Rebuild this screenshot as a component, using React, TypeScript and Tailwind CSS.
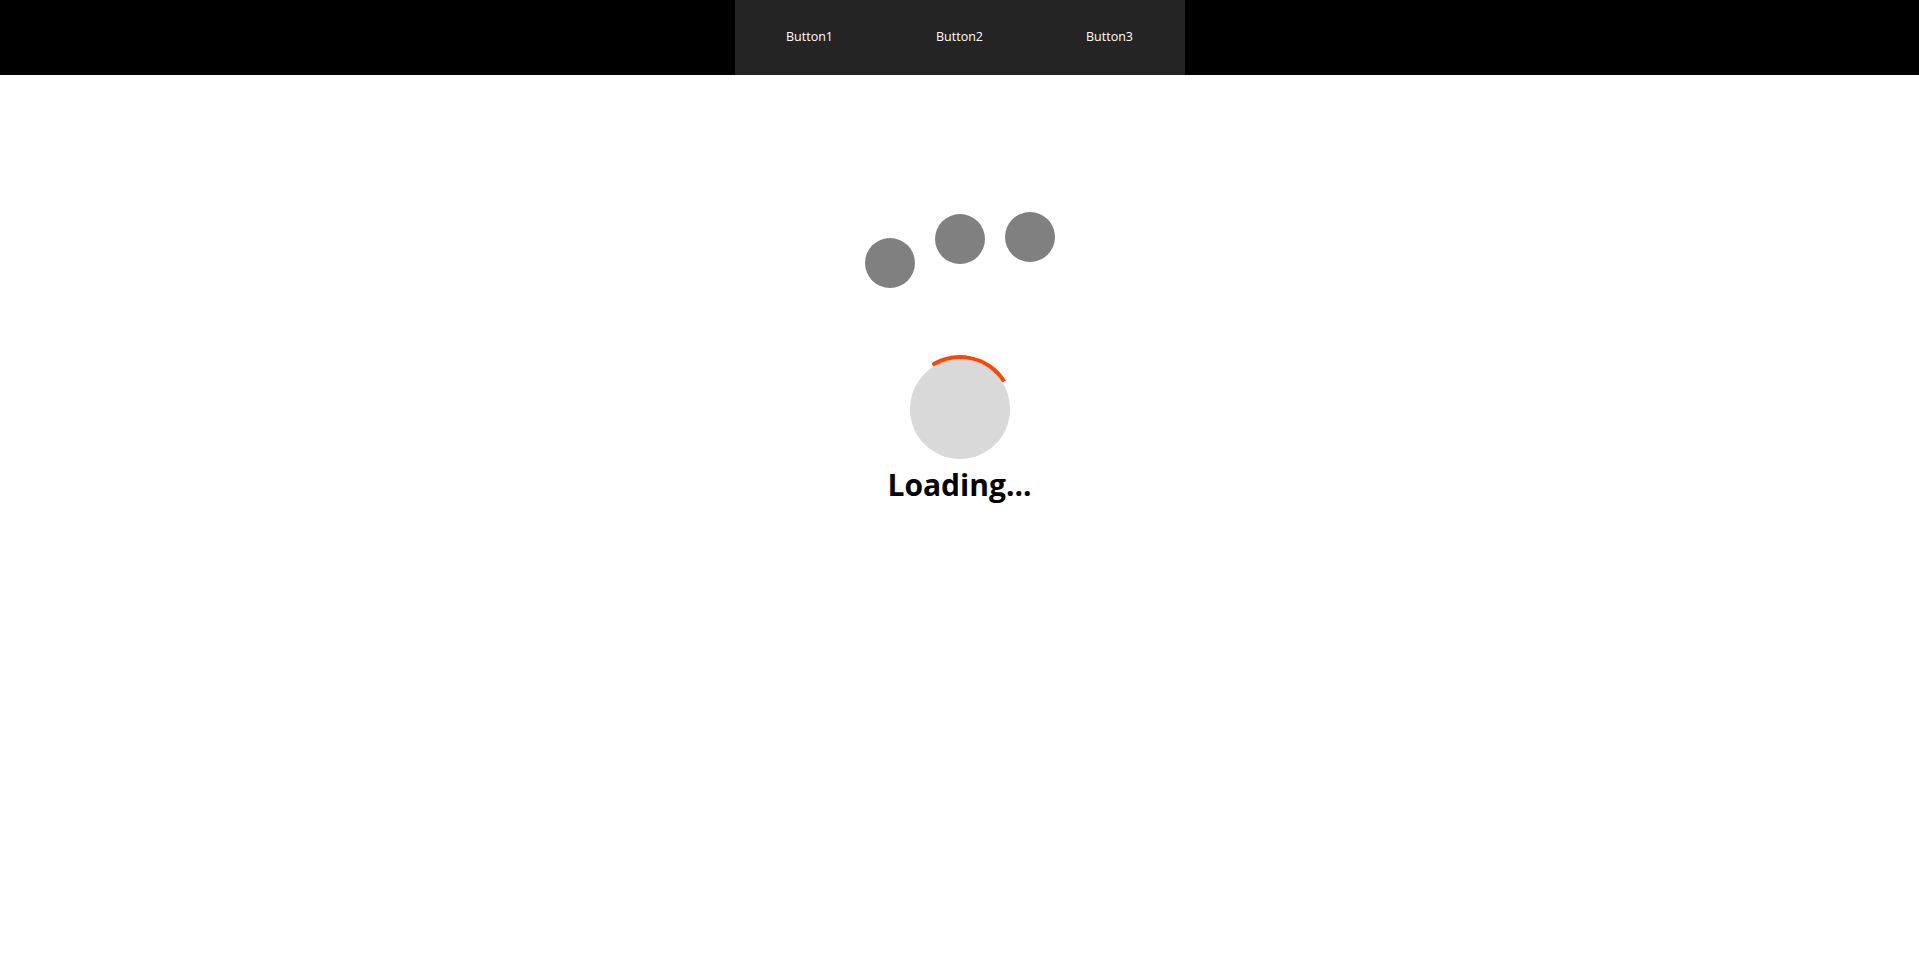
export default function App() {
  return (
    <div className="min-h-screen bg-white font-['Open_Sans',_sans-serif]">
      {/* Top bar */}
      <header className="h-[75px] bg-black flex justify-center">
        <nav className="w-[450px] h-full bg-[#242424] grid grid-cols-3">
          {['Button1', 'Button2', 'Button3'].map((label) => (
            <button
              key={label}
              className="flex items-center justify-center text-white text-[12.5px] pb-[1px]"
            >
              {label}
            </button>
          ))}
        </nav>
      </header>

      <main className="flex flex-col items-center">
        {/* Bouncing dots */}
        <div className="mt-[137px] flex items-start gap-5">
          <div className="mt-[26px] w-[50px] h-[50px] rounded-full bg-[#808080]"></div>
          <div className="mt-[2px] w-[50px] h-[50px] rounded-full bg-[#808080]"></div>
          <div className="w-[50px] h-[50px] rounded-full bg-[#808080]"></div>
        </div>

        {/* Spinner */}
        <div className="mt-[67px] w-[108px] h-[108px] relative flex items-center justify-center">
          <div className="absolute inset-0 rounded-full border-4 border-transparent border-t-[#ff4500] rotate-[13deg]"></div>
          <div className="w-[100px] h-[100px] rounded-full bg-[#d9d9d9]"></div>
        </div>
        <h1 className="text-[30px] font-bold text-black leading-none mt-[7px]">Loading...</h1>
      </main>
    </div>
  );
}
